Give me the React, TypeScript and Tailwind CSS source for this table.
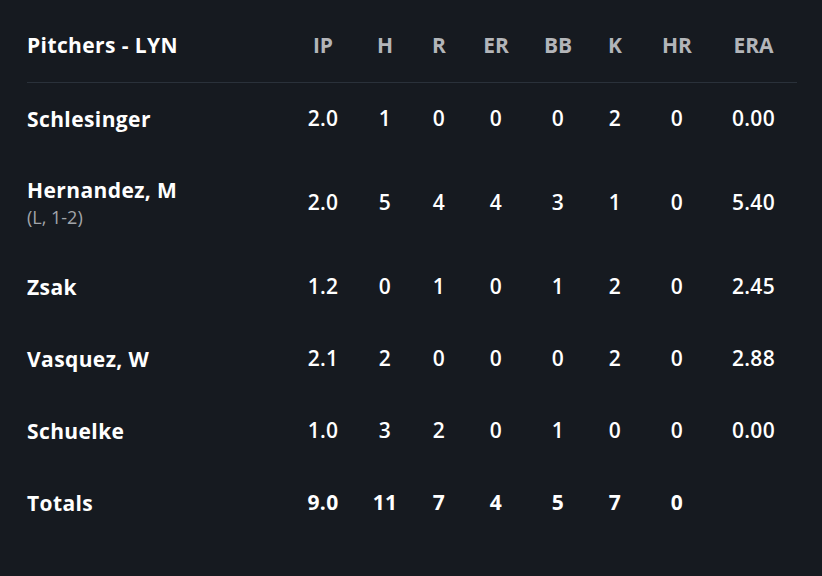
type Row = { name: string; note?: string; stats: string[]; total?: boolean };

const COLS = ["IP", "H", "R", "ER", "BB", "K", "HR", "ERA"];

const ROWS: Row[] = [
  { name: "Schlesinger", stats: ["2.0", "1", "0", "0", "0", "2", "0", "0.00"] },
  { name: "Hernandez, M", note: "(L, 1-2)", stats: ["2.0", "5", "4", "4", "3", "1", "0", "5.40"] },
  { name: "Zsak", stats: ["1.2", "0", "1", "0", "1", "2", "0", "2.45"] },
  { name: "Vasquez, W", stats: ["2.1", "2", "0", "0", "0", "2", "0", "2.88"] },
  { name: "Schuelke", stats: ["1.0", "3", "2", "0", "1", "0", "0", "0.00"] },
  { name: "Totals", stats: ["9.0", "11", "7", "4", "5", "7", "0", ""], total: true },
];

// name col + 8 stat cols, widths picked to line up with the columns
const GRID = "grid grid-cols-[265px_62px_62px_46px_68px_56px_58px_66px_87px] items-center";

export default function App() {
  return (
    <div
      className="min-h-screen w-full bg-[#161a20] pl-[27px] pr-[25px] text-white"
      style={{ fontFamily: "'Open Sans', Lato, sans-serif" }}
    >
      {/* header */}
      <div className={`${GRID} h-[83px] border-b border-[#2a313a] pt-[10px]`}>
        <div className="text-[21px] font-bold tracking-[0.4px]">Pitchers - LYN</div>
        {COLS.map((c) => (
          <div key={c} className="text-center text-[21px] font-bold text-[#b3b5b9]">
            {c}
          </div>
        ))}
      </div>

      {ROWS.map((r) => (
        <div key={r.name} className={`${GRID} ${r.note ? "h-[96px]" : "h-[72px]"}`}>
          <div className="flex flex-col">
            <span className="text-[21px] font-bold leading-[28px] tracking-[0.4px]">{r.name}</span>
            {r.note && (
              <span className="text-[18px] leading-[26px] text-[#a2a5aa]">{r.note}</span>
            )}
          </div>
          {r.stats.map((s, i) => (
            <div
              key={i}
              className={`text-center text-[21px] tracking-[0.3px] ${r.total ? "font-bold" : "font-semibold"}`}
            >
              {s}
            </div>
          ))}
        </div>
      ))}
    </div>
  );
}
